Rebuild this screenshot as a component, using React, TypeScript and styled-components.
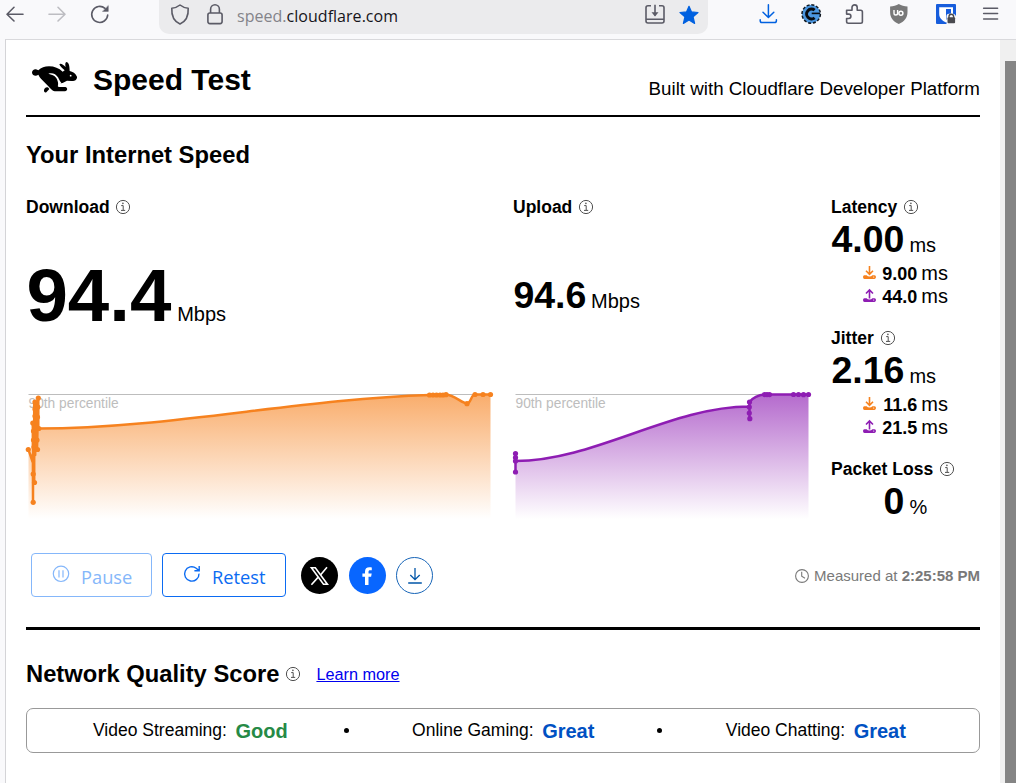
import React from 'react';
import styled, { createGlobalStyle } from 'styled-components';

const GlobalStyle = createGlobalStyle`
  * { box-sizing: border-box; }
  body {
    margin: 0;
    background: #f9f9fb;
    color: #000;
    font-family: "Liberation Sans", Arial, sans-serif;
    overflow: hidden;
  }
  svg { display: block; flex: none; overflow: visible; }
`;

const Window = styled.div`
  display: flex;
  flex-direction: column;
  width: 1016px;
  height: 783px;
`;

const Toolbar = styled.div`
  display: flex;
  align-items: flex-start;
  height: 39px;
  flex: none;
  padding-left: 6px;
`;

const NavButtons = styled.div`
  display: flex;
  gap: 24px;
  width: 153px;
  padding-top: 5px;
`;

const AddressBar = styled.div`
  display: flex;
  align-items: flex-start;
  width: 549px;
  height: 34px;
  padding: 4px 9px 0 11px;
  background: #ebebed;
  border-radius: 0 0 10px 10px;
`;

const SiteIdentity = styled.div`
  display: flex;
  gap: 17px;
`;

const Url = styled.div`
  flex: 1;
  margin-left: 14px;
  font: 16px/24px "Open Sans", "Noto Sans", sans-serif;
  letter-spacing: 0.03px;
  color: #15141a;
  span { color: #84848a; }
`;

const AddressActions = styled.div`
  display: flex;
  gap: 14px;
`;

const Extensions = styled.div`
  display: flex;
  padding: 4px 0 0 50px;
  gap: 23.7px;
`;

const Viewport = styled.div`
  display: flex;
  flex: 1;
  margin-left: 5px;
  border-top: 1px solid #d9d9dc;
  border-left: 1px solid #d4d4d7;
  background: #fff;
`;

const Page = styled.main`
  width: 994px;
  padding: 0 20px;
`;

const ScrollTrack = styled.div`
  flex: 1;
  padding: 21px 0 0 5px;
  background: #f0f0f0;
`;

const ScrollThumb = styled.div`
  height: 100%;
  background: #858585;
`;

const Header = styled.header`
  display: flex;
  align-items: flex-start;
  height: 77px;
  padding: 20px 0 0 6px;
  border-bottom: 2px solid #000;
`;

const Title = styled.h1`
  flex: 1;
  margin: 0 0 0 15px;
  font-size: 30px;
  line-height: 40px;
`;

const Tagline = styled.div`
  margin-top: 17px;
  font-size: 18.75px;
  line-height: 24px;
`;

const SectionTitle = styled.h2<{ $top?: number }>`
  margin: ${(p) => p.$top ?? 0}px 0 0;
  font-size: 23.75px;
  line-height: 30px;
`;

const Metrics = styled.div`
  display: grid;
  grid-template-columns: 487px 318px 149px;
  height: 383px;
  padding-top: 27px;
`;

const Column = styled.section`
  display: flex;
  flex-direction: column;
`;

const Label = styled.div`
  display: flex;
  align-items: center;
  gap: 6.8px;
  font-size: 17.5px;
  font-weight: 700;
  line-height: 20px;
`;

const Speed = styled.div<{ $size: number; $height: number; $top: number; $gap: number }>`
  display: flex;
  align-items: baseline;
  gap: ${(p) => p.$gap}px;
  height: ${(p) => p.$height}px;
  margin-top: ${(p) => p.$top}px;
  padding-left: 0.4px;
  line-height: ${(p) => p.$height}px;
  font-size: 20px;
  strong { font-size: ${(p) => p.$size}px; }
`;

const ChartArea = styled.div<{ $top: number }>`
  margin-top: ${(p) => p.$top}px;
`;

const Stat = styled.div`
  height: 131px;
`;

const StatValue = styled.div<{ $indent?: number }>`
  display: flex;
  align-items: baseline;
  gap: 5px;
  height: 40px;
  margin: 2px 0 3px;
  padding-left: ${(p) => p.$indent ?? 0.4}px;
  font-size: 20px;
  line-height: 40px;
  strong { font-size: 37.5px; }
`;

const SubStat = styled.div`
  display: flex;
  width: 117px;
  height: 23px;
  justify-content: flex-end;
  align-items: baseline;
  font-size: 20px;
  line-height: 23px;
  svg { align-self: flex-start; margin-top: 4px; }
  strong { width: 36px; margin: 0 4px 0 5px; text-align: right; font-size: 18px; }
`;

const Actions = styled.div`
  display: flex;
  align-items: center;
  height: 44px;
  padding-left: 5px;
`;

const Button = styled.button<{ $width: number; $color: string }>`
  display: flex;
  align-items: center;
  width: ${(p) => p.$width}px;
  height: 44px;
  margin-right: 10px;
  padding: 0 0 0 20px;
  border: 1.5px solid ${(p) => p.$color};
  border-radius: 4px;
  background: #fff;
  color: ${(p) => p.$color};
  font: 18.3px/30px "Open Sans", "Noto Sans", sans-serif;
  svg { margin: -2px 11px 0 0; }
  span { padding-top: 3px; }
`;

const Socials = styled.div`
  display: flex;
  flex: 1;
  gap: 10.5px;
  padding: 1px 0 0 5px;
`;

const Round = styled.a<{ $bg: string; $border?: string }>`
  display: flex;
  align-items: center;
  justify-content: center;
  width: 37px;
  height: 37px;
  border-radius: 50%;
  background: ${(p) => p.$bg};
  border: ${(p) => (p.$border ? `1px solid ${p.$border}` : '0')};
`;

const Measured = styled.div`
  display: flex;
  align-items: center;
  gap: 5px;
  padding-top: 2px;
  color: #797979;
  font-size: 15px;
  line-height: 20px;
  svg { margin-top: -1px; }
`;

const Divider = styled.div`
  height: 3px;
  margin-top: 30px;
  background: #000;
`;

const ScoreHeading = styled.div`
  display: flex;
  align-items: center;
  margin-top: 29px;
  svg { margin: 0 16.5px 0 6.5px; }
`;

const LearnMore = styled.a`
  color: #0000ee;
  font-size: 16.25px;
  line-height: 20px;
  text-decoration: underline;
`;

const ScoreBox = styled.div`
  display: flex;
  align-items: center;
  height: 45px;
  margin-top: 19px;
  padding-left: 66px;
  border: 1px solid #999;
  border-radius: 7px;
`;

const Score = styled.div<{ $color: string }>`
  display: flex;
  align-items: center;
  gap: 8.5px;
  font-size: 17.5px;
  line-height: 24px;
  span { margin-top: -1px; }
  strong { font-size: 20px; color: ${(p) => p.$color}; }
`;

const Dot = styled.div<{ $before: number; $after: number }>`
  width: 5px;
  height: 5px;
  margin: -1px ${(p) => p.$after}px 0 ${(p) => p.$before}px;
  border-radius: 50%;
  background: #000;
`;

const Info = () => (
  <svg width="14" height="14" viewBox="0 0 14 14" fill="none" stroke="#505050">
    <circle cx="7" cy="7" r="6.6" strokeWidth="1" />
    <path d="M5.2 5.6H7.2V10.2M5 10.4H9.2" strokeWidth="1" />
    <circle cx="6.9" cy="3.4" r=".8" fill="#505050" stroke="none" />
  </svg>
);

const Transfer = ({ up, color }: { up?: boolean; color: string }) => (
  <svg width="13" height="13" viewBox="0 0 13 13" fill="none" stroke={color} strokeWidth="1.6">
    <path d={up ? 'M6.5 9.5V1M3 4.5L6.5 1L10 4.5' : 'M6.5 0V8.2M3 4.8L6.5 8.3L10 4.8'} />
    <path
      d="M1.5 9.2H3.6Q4.7 10.5 6.5 10.5T9.4 9.2H11.5Q13 9.2 13 11T11.5 12.9H1.5Q0 12.9 0 11T1.5 9.2Z"
      fill={color}
      stroke="none"
    />
    <circle cx="10.7" cy="11" r=".6" fill="#fff" stroke="none" />
  </svg>
);

const Rabbit = () => (
  <svg width="46" height="34" viewBox="96 180 138 102">
    <path d="M96 218C96 211 102 207 108 208L115 211C123 203 134 199 147 199C163 199 177 205 188 215L194 211C187 204 180 200 178 193C181 188 190 194 197 201C195 194 195 187 200 186C208 188 209 204 209 213C218 215 227 220 231 230C232 239 224 244 214 243L201 242C195 245 190 249 183 250L178 250L173 258L176 261L196 261C204 263 203 273 195 274H164C157 273 152 266 145 259L123 236C118 231 117 227 115 224C108 230 97 227 96 218Z" />
    <path d="M145 221C157 217 168 222 174 232C178 239 180 245 184 249C179 252 177 254 174 259C176 248 172 235 163 228C158 224 151 223 145 221Z" fill="#fff" />
    <circle cx="212" cy="227" r="2.7" fill="#fff" />
    <path d="M132 270C134 264 139 260 145 263L148 267L139 277C135 279 131 276 132 270Z" />
  </svg>
);

const ORANGE = '#f6821f';
const PURPLE = '#8e1db3';

const Dots = ({ points, color }: { points: number[][]; color: string }) => (
  <g fill={color}>
    {points.map(([x, y], i) => <circle key={i} cx={x} cy={y} r="2.6" />)}
  </g>
);

interface ChartProps {
  id: string;
  color: string;
  width: number;
  area: string;
  line: string;
  points: number[][];
}

const Chart = ({ id, color, width, area, line, points }: ChartProps) => (
  <svg width={width} height="140" viewBox={`0 0 ${width} 140`}>
    <defs>
      <linearGradient id={id} gradientUnits="userSpaceOnUse" x1="0" y1="9" x2="0" y2="134">
        <stop offset="0" stopColor={color} stopOpacity=".66" />
        <stop offset="1" stopColor={color} stopOpacity="0" />
      </linearGradient>
    </defs>
    <path d={`M2.5 9.5H${width}`} stroke="#bdbdbd" />
    <text x="2.5" y="23" fontSize="13.75" fill="#bdbdbd">90th percentile</text>
    <path d={area} fill={`url(#${id})`} />
    <path d={line} fill="none" stroke={color} strokeWidth="2.5" strokeLinejoin="round" />
    <Dots points={points} color={color} />
  </svg>
);

const downTail = 'C142 43.5 272 14 404 10L420 9.7C428 9.5 436 18.5 441 18.5C445 18.5 445 9.5 449 9.5H464.5';
const upTail = 'C81 76 158 21.5 236.3 21.5L236.5 17C239 13 246 9.7 251.5 9.5H295.5';

const Shield = () => (
  <svg width="20" height="22" viewBox="0 0 20 22" fill="none" stroke="#5b5b66" strokeWidth="1.6">
    <path d="M10 1C7.5 3 4.5 4 1.8 4.2C1.4 11 3.5 17 10 20C16.5 17 18.6 11 18.2 4.2C15.5 4 12.5 3 10 1Z" strokeLinejoin="round" />
  </svg>
);

const Lock = () => (
  <svg width="16" height="21" viewBox="0 0 16 21" fill="none" stroke="#5b5b66" strokeWidth="1.6">
    <rect x=".9" y="9" width="14.2" height="10.6" rx="2" />
    <path d="M3.6 9V5.2A4.4 4.4 0 0 1 12.4 5.2V9" />
  </svg>
);

export default function App() {
  return (
    <Window>
      <GlobalStyle />
      <Toolbar>
        <NavButtons>
          <svg width="18" height="18" viewBox="0 0 18 18" fill="none" stroke="#5b5b66" strokeWidth="1.6" strokeLinecap="round" strokeLinejoin="round">
            <path d="M17 9.2H1.2M8 2.3L1 9.2L8 16" />
          </svg>
          <svg width="18" height="18" viewBox="0 0 18 18" fill="none" stroke="#bdbdc2" strokeWidth="1.6" strokeLinecap="round" strokeLinejoin="round">
            <path d="M1 9.2H16.8M10 2.3L17 9.2L10 16" />
          </svg>
          <svg width="19" height="19" viewBox="0 0 19 19" fill="none" stroke="#5b5b66" strokeWidth="1.6" strokeLinecap="round">
            <path d="M17.7 10A8 8 0 1 1 15 3.4" />
            <path d="M18.3 .8V6.4H12.7Z" fill="#5b5b66" strokeWidth=".4" />
          </svg>
        </NavButtons>
        <AddressBar>
          <SiteIdentity>
            <Shield />
            <Lock />
          </SiteIdentity>
          <Url><span>speed.</span>cloudflare.com</Url>
          <AddressActions>
            <svg width="20" height="20" viewBox="0 0 20 20" fill="none" stroke="#5b5b66" strokeWidth="1.6">
              <path d="M6 1.8H3Q1 1.8 1 3.8V17Q1 19 3 19H17Q19 19 19 17V3.8Q19 1.8 17 1.8H14M1 15.2H19M10 .8V11.5" />
              <path d="M6.5 8.2H13.5L10 12.5Z" fill="#5b5b66" stroke="none" />
            </svg>
            <svg width="20" height="20" viewBox="0 0 20 20" fill="#0061e0" stroke="#0061e0" strokeWidth="1.2" strokeLinejoin="round">
              <path d="M10 2.3L12.5 7.9L19 8.5L14.1 12.8L15.6 19.4L10 16L4.4 19.4L5.9 12.8L1 8.5L7.5 7.9Z" />
            </svg>
          </AddressActions>
        </AddressBar>
        <Extensions>
          <svg width="20" height="20" viewBox="2 0 20 20" fill="none" stroke="#0061e0" strokeWidth="1.5" strokeLinecap="round" strokeLinejoin="round">
            <path d="M12.4 .8V13.2M7 8.2L12.4 13.5L17.8 8.2M4.2 15.8V16.8Q4.2 18.6 6 18.6H18.6Q20.4 18.6 20.4 16.8V15.8" />
          </svg>
          <svg width="20" height="20" viewBox="0.8 0 20 20">
            <circle cx="10" cy="10" r="9.2" fill="#4b96df" stroke="#111820" strokeWidth="1.5" strokeDasharray="3 1.8" />
            <path d="M13.4 6.2A4.9 4.9 0 1 0 13.4 13.8" fill="none" stroke="#080b10" strokeWidth="3" />
            <path d="M10.5 9.4H19" fill="none" stroke="#080b10" strokeWidth="1.6" />
          </svg>
          <svg width="20" height="20" viewBox="0.6 0 20 20" fill="none" stroke="#5b5b66" strokeWidth="1.6" strokeLinejoin="round">
            <path d="M2.2 6.2H7.6V3.5A2.6 2.6 0 0 1 12.8 3.5V6.2H16.3Q18 6.2 18 8V17.5Q18 19.2 16.3 19.2H4Q2.2 19.2 2.2 17.5V14.5H4.3A2.2 2.2 0 0 0 4.3 10.1H2.2Z" />
          </svg>
          <svg width="20" height="20" viewBox="0.2 0 20 20">
            <path d="M10 0C7.5 1.7 4.5 2.3 1.3 2.4V8C1.3 14 4.5 17.5 10 20C15.5 17.5 18.7 14 18.7 8V2.4C15.5 2.3 12.5 1.7 10 0Z" fill="#797979" />
            <path d="M5.2 6V9.2Q5.2 11 7 11Q8.8 11 8.8 9.2V6" fill="none" stroke="#fff" strokeWidth="1.4" />
            <circle cx="12.1" cy="9.2" r="2" fill="none" stroke="#fff" strokeWidth="1.5" />
          </svg>
          <svg width="24" height="20" viewBox="-3 0 24 20">
            <rect width="20" height="20" rx="1" fill="#175ddc" />
            <path d="M3.2 3.2H17V10C17 14 14 16.5 10 18.5C6 16.5 3.2 14 3.2 10Z" fill="#fff" />
            <path d="M10 5H15V10Q15 13 10 16Z" fill="#175ddc" />
            <path d="M10.5 12Q10.5 9.6 15 9.6T20.2 13V20.2H10.5Z" fill="#f9f9fb" />
            <rect x="11.5" y="13.2" width="7.6" height="6" rx="1" fill="#4a4a4f" />
            <path d="M13 14V12.6A2.3 2.3 0 0 1 17.6 12.6V14" fill="none" stroke="#4a4a4f" strokeWidth="1.4" />
          </svg>
          <svg width="16" height="20" viewBox="-2.8 0 16 20" stroke="#5b5b66" strokeWidth="1.5" strokeLinecap="round">
            <path d="M.8 4.2H14.8M.8 9.6H14.8M.8 14.9H14.8" />
          </svg>
        </Extensions>
      </Toolbar>
      <Viewport>
        <Page>
          <Header>
            <Rabbit />
            <Title>Speed Test</Title>
            <Tagline>Built with Cloudflare Developer Platform</Tagline>
          </Header>
          <SectionTitle $top={23}>Your Internet Speed</SectionTitle>
          <Metrics>
            <Column>
              <Label>Download <Info /></Label>
              <Speed $size={74.5} $height={80} $top={39} $gap={5.8}><strong>94.4</strong>Mbps</Speed>
              <ChartArea $top={49}>
                <Chart
                  id="down"
                  color={ORANGE}
                  width={465}
                  area={`M2.5 64.5L7 78L8 17L12.5 43.5${downTail}V134H2.5Z`}
                  line={`M2.5 64.5L7 78V117L6.8 38L8.2 97.5L8.2 18L9.2 70V18L11 64.5L12.3 13V43L10.5 17L12.5 43.5${downTail}`}
                  points={[
                    [2.3, 64.5], [7.2, 117.3], [7.2, 89], [8.5, 97.5], [6.8, 38], [7.5, 46], [7.5, 55], [8, 62], [9, 17], [9, 24], [9, 31],
                    [12.3, 13], [11.8, 22], [11.5, 32], [11.5, 64.5], [11, 55], [12.8, 43.5],
                    [403.5, 10], [407, 10], [410.5, 10], [414, 10], [417, 10], [420, 9.7],
                    [441, 18.7], [449, 9.5], [457, 9.5], [464.5, 9.5],
                  ]}
                />
              </ChartArea>
            </Column>
            <Column>
              <Label>Upload <Info /></Label>
              <Speed $size={37.5} $height={40} $top={58} $gap={4.6}><strong>94.6</strong>Mbps</Speed>
              <ChartArea $top={70}>
                <Chart
                  id="up"
                  color={PURPLE}
                  width={296}
                  area={`M2.5 76${upTail}V134H2.5Z`}
                  line={`M2.5 68.5V87V76${upTail}M236.5 17V33.5`}
                  points={[
                    [2.5, 68.5], [2.5, 72.5], [2.5, 76], [2.5, 87], [236.5, 17], [236.3, 22], [236.3, 28], [236.8, 33.7],
                    [251.5, 9.6], [254, 9.6], [256.5, 9.6], [280.5, 9.5], [285.5, 9.5], [290.5, 9.7], [295.5, 9.5],
                  ]}
                />
              </ChartArea>
            </Column>
            <Column>
              <Stat>
                <Label>Latency <Info /></Label>
                <StatValue><strong>4.00</strong>ms</StatValue>
                <SubStat><Transfer color={ORANGE} /><strong>9.00</strong>ms</SubStat>
                <SubStat><Transfer up color={PURPLE} /><strong>44.0</strong>ms</SubStat>
              </Stat>
              <Stat>
                <Label>Jitter <Info /></Label>
                <StatValue><strong>2.16</strong>ms</StatValue>
                <SubStat><Transfer color={ORANGE} /><strong>11.6</strong>ms</SubStat>
                <SubStat><Transfer up color={PURPLE} /><strong>21.5</strong>ms</SubStat>
              </Stat>
              <div>
                <Label>Packet Loss <Info /></Label>
                <StatValue $indent={52.6}><strong>0</strong>%</StatValue>
              </div>
            </Column>
          </Metrics>
          <Actions>
            <Button $width={121} $color="#85b7fa">
              <svg width="18" height="18" viewBox="0 0 18 18" fill="none" stroke="currentColor" strokeWidth="1.2">
                <circle cx="9" cy="8.8" r="7.7" /><path d="M7 5.2V12.4M11 5.2V12.4" />
              </svg>
              <span>Pause</span>
            </Button>
            <Button $width={124} $color="#0b6bf2">
              <svg width="18" height="18" viewBox="0 0 18 18" fill="none" stroke="currentColor" strokeWidth="1.4">
                <path d="M16 8.6A7.2 7.2 0 1 1 13.2 3.2L16 5.6M16.2 1V5.8H11.4" />
              </svg>
              <span>Retest</span>
            </Button>
            <Socials>
              <Round $bg="#000">
                <svg width="19" height="18" viewBox="0 0 19 18" fill="none" stroke="#fff" strokeWidth="1.6">
                  <path d="M1.4 .8H5.3L17.4 17.2H13.5Z" /><path d="M17 .3L10.7 7.7M8 10.4L1.4 17.8" />
                </svg>
              </Round>
              <Round $bg="#0866ff">
                <svg width="11" height="18" viewBox="0 0 11 18" fill="#fff">
                  <path d="M3 18V9.8H.4V6.5H3V4.7C3 1.5 4.6 .2 7.4 .2C8.5 .2 9.3 .3 9.8 .5V3.3H8.2C6.9 3.3 6.5 3.9 6.5 5V6.5H9.7L9.1 9.8H6.5V18Z" />
                </svg>
              </Round>
              <Round $bg="#fff" $border="#1765b8">
                <svg width="14" height="16" viewBox="0 0 14 16" fill="none" stroke="#0055a8" strokeWidth="1.3">
                  <path d="M7 0V11.5M2.3 7L7 11.7L11.7 7M.2 15H13.8" />
                </svg>
              </Round>
            </Socials>
            <Measured>
              <svg width="14" height="14" viewBox="0 0 14 14" fill="none" stroke="#797979" strokeWidth="1.1">
                <circle cx="7" cy="7" r="6.4" /><path d="M6.7 2.7V7.3L10 9.2" />
              </svg>
              <span>Measured at <b>2:25:58 PM</b></span>
            </Measured>
          </Actions>
          <Divider />
          <ScoreHeading>
            <SectionTitle>Network Quality Score</SectionTitle>
            <Info />
            <LearnMore>Learn more</LearnMore>
          </ScoreHeading>
          <ScoreBox>
            <Score $color="#268a46"><span>Video Streaming:</span><strong>Good</strong></Score>
            <Dot $before={56.4} $after={63} />
            <Score $color="#0051c3"><span>Online Gaming:</span><strong>Great</strong></Score>
            <Dot $before={62.4} $after={64} />
            <Score $color="#0051c3"><span>Video Chatting:</span><strong>Great</strong></Score>
          </ScoreBox>
        </Page>
        <ScrollTrack><ScrollThumb /></ScrollTrack>
      </Viewport>
    </Window>
  );
}
